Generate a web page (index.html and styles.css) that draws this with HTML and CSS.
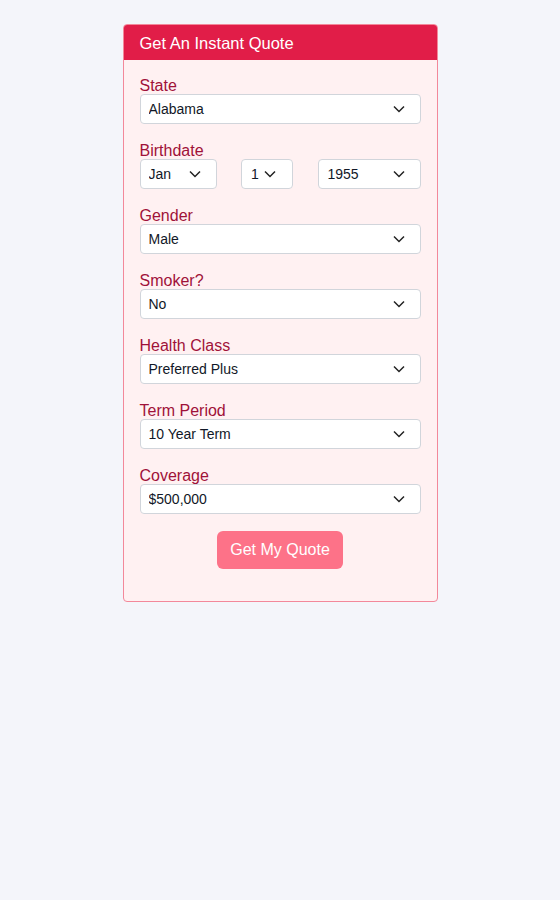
FILE: index.html
```html
<!DOCTYPE html>
<html lang="en">
<head>
    <meta charset="UTF-8">
    <meta name="viewport" content="width=device-width, initial-scale=1.0">
    <title>Get An Instant Quote</title>
    <link rel="stylesheet" href="styles.css">
</head>
<body>

    <div class="quote-card">
        <div class="quote-header">Get An Instant Quote</div>

        <form class="quote-form">
            <div class="field">
                <label for="state">State</label>
                <select id="state">
                    <option>Alabama</option>
                    <option>Alaska</option>
                    <option>Arizona</option>
                </select>
            </div>

            <div class="field">
                <label for="month">Birthdate</label>
                <div class="birth-row">
                    <select id="month" class="sel-month">
                        <option>Jan</option>
                        <option>Feb</option>
                    </select>
                    <select id="day" class="sel-day">
                        <option>1</option>
                        <option>2</option>
                    </select>
                    <select id="year" class="sel-year">
                        <option>1955</option>
                        <option>1956</option>
                    </select>
                </div>
            </div>

            <div class="field">
                <label for="gender">Gender</label>
                <select id="gender">
                    <option>Male</option>
                    <option>Female</option>
                </select>
            </div>

            <div class="field">
                <label for="smoker">Smoker?</label>
                <select id="smoker">
                    <option>No</option>
                    <option>Yes</option>
                </select>
            </div>

            <div class="field">
                <label for="health">Health Class</label>
                <select id="health">
                    <option>Preferred Plus</option>
                    <option>Preferred</option>
                    <option>Standard</option>
                </select>
            </div>

            <div class="field">
                <label for="term">Term Period</label>
                <select id="term">
                    <option>10 Year Term</option>
                    <option>20 Year Term</option>
                </select>
            </div>

            <div class="field">
                <label for="coverage">Coverage</label>
                <select id="coverage">
                    <option>$500,000</option>
                    <option>$1,000,000</option>
                </select>
            </div>

            <div class="actions">
                <button type="button">Get My Quote</button>
            </div>
        </form>
    </div>

</body>
</html>
```

FILE: styles.css
```css
body {
    font-family: 'Liberation Sans', Arial, sans-serif;
    margin: 0;
    padding: 24px 0;
    background-color: #f4f5fa;
}

.quote-card {
    width: 313px;
    margin: 0 auto;
    background-color: #fff1f2;
    border: 1px solid #f3889a;
    border-radius: 4px;
    overflow: hidden;
}

.quote-header {
    background-color: #e11d48;
    color: #fff;
    font-size: 16.5px;
    line-height: 36px;
    height: 35px;
    padding: 0 16px;
}

.quote-form {
    padding: 14px 16px 32px;
}

.field {
    margin-bottom: 15px;
}

label {
    display: block;
    color: #9f1239;
    font-size: 16px;
    line-height: 17px;
    padding-top: 3px;
}

select {
    display: block;
    width: 100%;
    height: 30px;
    padding: 0 28px 0 8px;
    font-family: inherit;
    font-size: 14px;
    color: #111827;
    background-color: #fff;
    border: 1px solid #d1d5db;
    border-radius: 4px;
    appearance: none;
    -webkit-appearance: none;
    background-image: url("data:image/svg+xml,%3Csvg xmlns='http://www.w3.org/2000/svg' width='12' height='8' viewBox='0 0 12 8'%3E%3Cpath d='M1 1.5l5 5 5-5' fill='none' stroke='%23222' stroke-width='1.5'/%3E%3C/svg%3E");
    background-repeat: no-repeat;
    background-position: right 15px center;
    background-size: 12px 8px;
}

.birth-row {
    display: flex;
    justify-content: space-between;
}

.sel-month {
    width: 77px;
}

.sel-day {
    width: 52px;
    padding-left: 9px;
    background-position: right 16px center;
}

.sel-year {
    width: 103px;
    padding-left: 9px;
}

.actions {
    display: flex;
    justify-content: center;
    padding-top: 2px;
}

button {
    background-color: #fd7288;
    color: #fff;
    font-family: inherit;
    font-size: 16px;
    height: 38px;
    padding: 0 13px;
    border: none;
    border-radius: 6px;
    cursor: pointer;
}
```
